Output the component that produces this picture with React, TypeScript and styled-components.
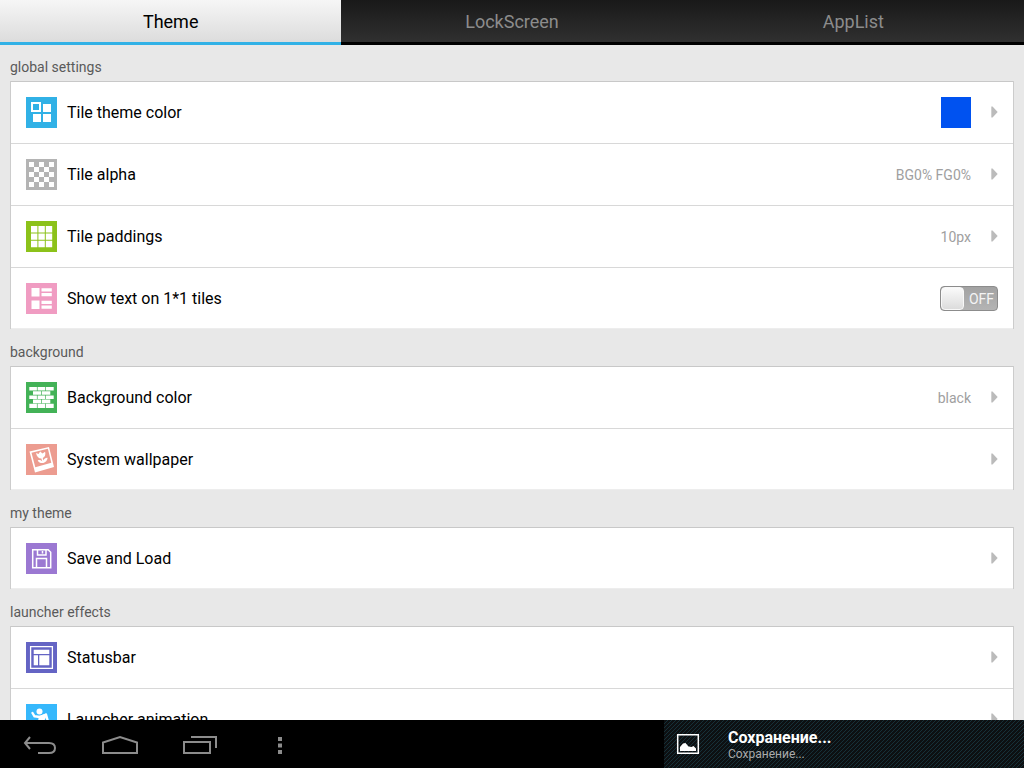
import React, { useState } from "react";
import styled, { createGlobalStyle } from "styled-components";

const GlobalStyle = createGlobalStyle`
  * { box-sizing: border-box; }
  body { margin: 0; font-family: Roboto, "Liberation Sans", sans-serif; }
  button { font: inherit; border: 0; padding: 0; background: none; color: inherit; text-align: left; cursor: pointer; }
`;

const Screen = styled.div`
  display: flex;
  flex-direction: column;
  height: 100vh;
  background: #e8e8e8;
`;

const Tabs = styled.div`
  display: flex;
  flex: none;
`;

const Tab = styled.button<{ $active: boolean }>`
  && {
    flex: 1;
    height: 45px;
    padding-top: 2px;
    font-size: 18px;
    line-height: 40px;
    text-align: center;
    color: ${(p) => (p.$active ? "#000" : "#8c8c8c")};
    background: ${(p) =>
      p.$active
        ? "linear-gradient(#f6f6f6, #dcdcdc)"
        : "linear-gradient(#191919, #303030)"};
    border-bottom: 3px solid ${(p) => (p.$active ? "#31b1e6" : "#000")};
  }
`;

const Content = styled.main`
  display: flex;
  flex-direction: column;
  gap: 9px;
  flex: 1;
  min-height: 0;
  padding: 8px 10px 0;
  overflow-y: auto;
  scrollbar-width: none;
`;

const Section = styled.section`
  flex: none;
`;

const Heading = styled.h2`
  margin: 0;
  font-size: 14px;
  font-weight: 400;
  line-height: 28px;
  color: #5a5a5a;
`;

const Card = styled.div`
  background: #fff;
  border: solid #ccc;
  border-width: 0 1px;
`;

const Row = styled.div`
  display: flex;
  align-items: center;
  width: 100%;
  height: 62px;
  padding: 0 15px;
  border-top: 1px solid #d8d8d8;

  &:first-child {
    border-top-color: #c8c8c8;
  }

  &:last-child {
    box-shadow: inset 0 -1px #ededed;
  }
`;

const RowButton = styled.button`
  && {
    display: flex;
    flex: 1;
    align-items: center;
    height: 100%;
  }
`;

const RowLabel = styled.span`
  flex: 1;
  margin-left: 10px;
  font-size: 16px;
  line-height: 20px;
  color: #000;
`;

const Value = styled.span`
  margin-right: 20px;
  font-size: 14px;
  line-height: 20px;
  color: #a0a0a0;
`;

const Swatch = styled.span`
  width: 30px;
  height: 31px;
  margin-right: 20px;
  background: #0052f0;
`;

const Toggle = styled.span`
  position: relative;
  display: flex;
  align-items: center;
  justify-content: flex-end;
  width: 58px;
  height: 25px;
  padding-right: 3px;
  border: 1px solid #8c8c8c;
  border-radius: 4px;
  background: linear-gradient(#a2a2a2, #b4b4b4);
  font-size: 14px;
  line-height: 23px;
  color: #f4f4f4;
`;

const ToggleText = styled.span`
  padding-top: 2px;
`;

const ToggleInput = styled.input`
  position: absolute;
  inset: 0;
  width: 100%;
  height: 100%;
  margin: 0;
  opacity: 0;
`;

const Knob = styled.span`
  width: 23px;
  height: 23px;
  margin-right: auto;
  border: 1px solid #f8f8f8;
  border-radius: 4px;
  background: linear-gradient(#fafafa, #dcdcdc);
`;

const NavBar = styled.footer`
  display: flex;
  justify-content: space-between;
  flex: none;
  height: 48px;
  background: #000;
`;

const NavButtons = styled.nav`
  display: flex;
`;

const NavButton = styled.button`
  && {
    display: flex;
    align-items: center;
    justify-content: center;
    width: 80px;
    padding-top: 2px;
  }
`;

const Notice = styled.div`
  display: flex;
  align-items: center;
  width: 360px;
  padding-left: 12px;
  gap: 28px;
  background: linear-gradient(135deg, #0d1012 42%, #163038 46% 54%, #0d1012 58%) 0 0 / 4px 4px;
`;

const NoticeText = styled.div`
  display: flex;
  flex-direction: column;
  padding-top: 2px;
`;

const NoticeTitle = styled.strong`
  font-size: 16px;
  font-weight: 700;
  line-height: 18px;
  color: #fff;
`;

const NoticeDetail = styled.span`
  font-size: 12px;
  line-height: 14px;
  color: #aaa;
`;

const art: Record<string, { bg: string; body: React.ReactNode }> = {
  tiles: {
    bg: "#31b1e6",
    body: (
      <>
        <path fill="none" stroke="#fff" strokeWidth="2" d="M6 6h8v8H6z" />
        <path d="M17 7h8v8h-8zM7 17h8v8H7zM17 17h8v8h-8z" />
      </>
    ),
  },
  alpha: {
    bg: "#b4b4b4",
    body: (
      <path d="M3 3h5v5H3zM13 3h5v5h-5zM23 3h5v5h-5zM8 8h5v5H8zM18 8h5v5h-5zM3 13h5v5H3zM13 13h5v5h-5zM23 13h5v5h-5zM8 18h5v5H8zM18 18h5v5h-5zM3 23h5v5H3zM13 23h5v5h-5zM23 23h5v5h-5z" />
    ),
  },
  grid: {
    bg: "#8cc21a",
    body: (
      <path d="M5 5h6.400v6.400H5zM12.400 5h6.400v6.400h-6.400zM19.800 5h6.400v6.400h-6.400zM5 12.400h6.400v6.400H5zM12.400 12.400h6.400v6.400h-6.400zM19.800 12.400h6.400v6.400h-6.400zM5 19.800h6.400v6.400H5zM12.400 19.800h6.400v6.400h-6.400zM19.800 19.800h6.400v6.400h-6.400z" />
    ),
  },
  list: {
    bg: "#f09cc2",
    body: (
      <path d="M5.500 5h8v8.500h-8zM15.500 5.200h10.300v3.300H15.500zM15.500 10h10.300v3.300H15.500zM5.500 17.500h8V26h-8zM15.500 17.700h10.300V21H15.500zM15.500 22.400h10.300v3.300H15.500z" />
    ),
  },
  bricks: {
    bg: "#43b257",
    body: (
      <path d="M3.300 5h7.600v3.600H3.300zM11.600 5h7.600v3.600h-7.600zM19.900 5h7.800v3.600h-7.800zM7 9.200h8v3.600H7zM15.700 9.200h8.600v3.600h-8.600zM3.300 13.400h7.600V17H3.300zM11.600 13.400h7.600V17h-7.600zM19.900 13.400h7.800V17h-7.800zM7 17.600h8v3.600H7zM15.700 17.600h8.600v3.600h-8.600zM3.300 21.800h7.600v4.200H3.300zM11.600 21.800h7.600v4.200h-7.600zM19.900 21.800h7.800v4.200h-7.800z" />
    ),
  },
  photo: {
    bg: "#ec9c90",
    body: (
      <>
        <path
          fillRule="evenodd"
          d="M3.500 7.500 23 3l5 20-19 5.500zM5.500 8.700l3.800 14.500 16-4.400L21.900 4.800z"
        />
        <path d="M10 9l2.500 1 1.700-2.600L16.500 9.500l2.600-1.700c.8 3-.2 5.400-2.400 6.200l.8 2.400c.7-1.800 2.300-2.700 4.100-2.500-.3 2.600-2 4.300-4.300 5-2.500.4-4.300-.4-5.600-2.500 1.800-.8 3.300-.3 4.600 1l-.9-2.900C12.700 14.600 10.600 12.600 10 9z" />
      </>
    ),
  },
  disk: {
    bg: "#9b78d2",
    body: (
      <path
        fill="none"
        stroke="#fff"
        strokeWidth="1.500"
        d="M6.700 6.700h15.500l2.500 2.500v15.500h-18zM10.500 24.500v-9h10v9M11.500 7v5h8.500V7M16.500 8v2.500"
      />
    ),
  },
  status: {
    bg: "#6464c4",
    body: (
      <>
        <path fill="none" stroke="#fff" strokeWidth="1.300" d="M4.600 4.600h21.800v21.800H4.600z" />
        <path d="M7.700 7.700h15.600V12H7.700zM7.700 13.200H12v10.100H7.700zM13.300 13.200h10v10.100h-10z" />
      </>
    ),
  },
  runner: {
    bg: "#36b8fc",
    body: (
      <>
        <circle cx="13.500" cy="7.500" r="3" />
        <path
          fill="none"
          stroke="#fff"
          strokeWidth="2.400"
          strokeLinecap="round"
          strokeLinejoin="round"
          d="M6.500 9l2 3.300 5.500.7 6-2.500 1.500 5.500M14 19l5.500 2-1 6M12.500 19l-2 4-5 .5"
        />
        <path d="M13 12l7-2.500 1 2L16.500 20l-5-.5z" />
      </>
    ),
  },
};

const TileIcon = ({ name }: { name: string }) => (
  <svg width="31" height="31" viewBox="0 0 31 31" fill="#fff" aria-hidden="true">
    <path fill={art[name].bg} d="M0 0h31v31H0z" />
    {art[name].body}
  </svg>
);

const Arrow = () => (
  <svg width="7" height="13" viewBox="0 0 7 13" aria-hidden="true">
    <path fill="#bbb" d="M.3.500H1.500L6.700 6 1.500 11.500H.3z" />
  </svg>
);

type Item = { icon: string; label: string; value?: string; swatch?: boolean; toggle?: boolean };

const sections: { title: string; items: Item[] }[] = [
  {
    title: "global settings",
    items: [
      { icon: "tiles", label: "Tile theme color", swatch: true },
      { icon: "alpha", label: "Tile alpha", value: "BG0% FG0%" },
      { icon: "grid", label: "Tile paddings", value: "10px" },
      { icon: "list", label: "Show text on 1*1 tiles", toggle: true },
    ],
  },
  {
    title: "background",
    items: [
      { icon: "bricks", label: "Background color", value: "black" },
      { icon: "photo", label: "System wallpaper" },
    ],
  },
  { title: "my theme", items: [{ icon: "disk", label: "Save and Load" }] },
  {
    title: "launcher effects",
    items: [
      { icon: "status", label: "Statusbar" },
      { icon: "runner", label: "Launcher animation" },
    ],
  },
];

const SettingRow = ({ item }: { item: Item }) => {
  const [on, setOn] = useState(false);
  if (item.toggle) {
    return (
      <Row as="label">
        <TileIcon name={item.icon} />
        <RowLabel>{item.label}</RowLabel>
        <Toggle>
          {!on && <Knob />}
          <ToggleText>{on ? "ON" : "OFF"}</ToggleText>
          {on && <Knob />}
          <ToggleInput type="checkbox" checked={on} onChange={() => setOn(!on)} />
        </Toggle>
      </Row>
    );
  }
  return (
    <Row>
      <RowButton>
        <TileIcon name={item.icon} />
        <RowLabel>{item.label}</RowLabel>
        {item.value && <Value>{item.value}</Value>}
        {item.swatch && <Swatch />}
        <Arrow />
      </RowButton>
    </Row>
  );
};

const App = () => {
  const [tab, setTab] = useState("Theme");
  return (
    <>
      <GlobalStyle />
      <Screen>
        <Tabs role="tablist">
          {["Theme", "LockScreen", "AppList"].map((t) => (
            <Tab key={t} role="tab" aria-selected={t === tab} $active={t === tab} onClick={() => setTab(t)}>
              {t}
            </Tab>
          ))}
        </Tabs>
        <Content>
          {sections.map((s) => (
            <Section key={s.title}>
              <Heading>{s.title}</Heading>
              <Card>
                {s.items.map((i) => (
                  <SettingRow key={i.label} item={i} />
                ))}
              </Card>
            </Section>
          ))}
        </Content>
        <NavBar>
          <NavButtons>
            <NavButton aria-label="Back">
              <svg width="34" height="20" viewBox="0 0 34 20" fill="none" stroke="#8c8c8c" strokeWidth="2">
                <path d="M7 2L2 8l5 6M2 8h24q6 0 6 5t-6 5H15" />
              </svg>
            </NavButton>
            <NavButton aria-label="Home">
              <svg width="36" height="20" viewBox="0 0 36 20" fill="none" stroke="#8c8c8c" strokeWidth="2">
                <path d="M1 18V7.500L18 2l17 5.500V18z" />
              </svg>
            </NavButton>
            <NavButton aria-label="Recent apps">
              <svg width="34" height="18" viewBox="0 0 34 18" fill="none" stroke="#8c8c8c" strokeWidth="2">
                <path d="M1 6h26v11H1zM8 1h25v11" />
              </svg>
            </NavButton>
            <NavButton aria-label="Menu">
              <svg width="4" height="17" viewBox="0 0 4 17" fill="#8c8c8c">
                <path d="M0 0h4v4H0zM0 6.500h4v4H0zM0 13h4v4H0z" />
              </svg>
            </NavButton>
          </NavButtons>
          <Notice role="status">
            <svg width="24" height="24" viewBox="0 0 24 24" aria-hidden="true">
              <path fill="none" stroke="#fff" strokeWidth="1.500" d="M1.700 2.700h20.600v18.600H1.700z" />
              <path fill="#fff" d="M4 19v-4l3-3.500 2.500-.5 3 3.500 3 .5 2-1 2.500 2.500V19z" />
            </svg>
            <NoticeText>
              <NoticeTitle>Сохранение...</NoticeTitle>
              <NoticeDetail>Сохранение...</NoticeDetail>
            </NoticeText>
          </Notice>
        </NavBar>
      </Screen>
    </>
  );
};

export default App;
